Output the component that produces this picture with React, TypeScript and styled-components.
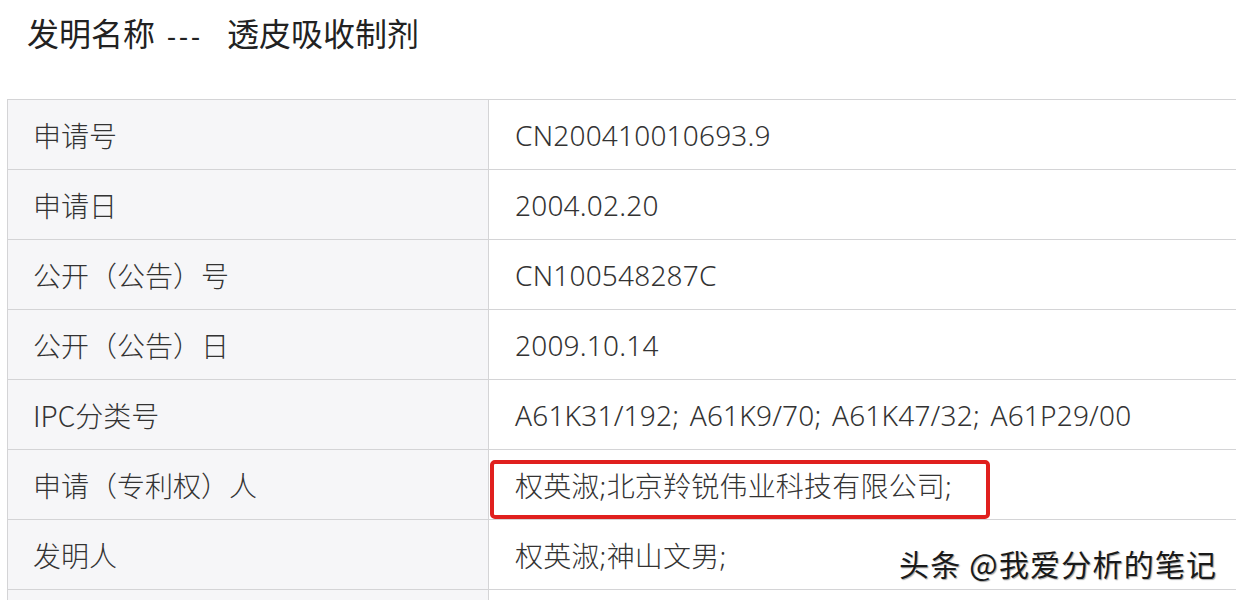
import React from 'react'
import styled, { createGlobalStyle } from 'styled-components'

const GlobalStyle = createGlobalStyle`
  html, body {
    margin: 0;
    padding: 0;
    background: #fff;
    overflow: hidden;
  }
  body {
    font-family: "Noto Sans", "Noto Sans CJK SC", sans-serif;
    color: #333;
  }
`

interface Row {
  label: string
  value: string
  marked?: boolean
}

const rows: Row[] = [
  { label: '申请号', value: 'CN200410010693.9' },
  { label: '申请日', value: '2004.02.20' },
  { label: '公开（公告）号', value: 'CN100548287C' },
  { label: '公开（公告）日', value: '2009.10.14' },
  { label: 'IPC分类号', value: 'A61K31/192; A61K9/70; A61K47/32; A61P29/00' },
  { label: '申请（专利权）人', value: '权英淑;北京羚锐伟业科技有限公司;', marked: true },
  { label: '发明人', value: '权英淑;神山文男;' },
  { label: '', value: '' },
]

export default function App() {
  return (
    <StyledPage>
      <GlobalStyle />
      <StyledTitle>
        发明名称<StyledDash>---</StyledDash>透皮吸收制剂
      </StyledTitle>
      <StyledTable>
        {rows.map((row, i) => (
          <React.Fragment key={i}>
            <StyledLabel>{row.label}</StyledLabel>
            <StyledValue>
              {row.value}
              {row.marked && <StyledMark />}
            </StyledValue>
          </React.Fragment>
        ))}
      </StyledTable>
      <StyledWatermark>头条 @我爱分析的笔记</StyledWatermark>
    </StyledPage>
  )
}

const StyledPage = styled.div`
  position: relative;
  width: 1236px;
  height: 600px;
  overflow: hidden;
`

const StyledTitle = styled.h1`
  margin: 0;
  padding: 12px 0 0 27px;
  height: 99px;
  font-size: 32px;
  line-height: 40px;
  font-weight: 400;
  color: #222;
  font-family: "Noto Sans CJK SC", "Noto Sans", sans-serif;
  box-sizing: border-box;
`

const StyledDash = styled.span`
  display: inline-block;
  margin: 0 24px 0 12px;
  letter-spacing: 3px;
  font-family: "Noto Sans", sans-serif;
  font-size: 28px;
`

const StyledTable = styled.div`
  display: grid;
  grid-template-columns: 481px 760px;
  grid-auto-rows: 70px;
  margin-left: 7px;
  border-top: 1px solid #d4d4d6;
  border-left: 1px solid #d4d4d6;
`

const StyledCell = styled.div`
  display: flex;
  align-items: center;
  box-sizing: border-box;
  border-right: 1px solid #d4d4d6;
  border-bottom: 1px solid #d4d4d6;
  font-size: 28px;
  font-weight: 300;
  color: #333;
  white-space: nowrap;
`

const StyledLabel = styled(StyledCell)`
  padding-left: 25px;
  background: #f6f6f8;
  font-family: "Noto Sans CJK SC", "Noto Sans", sans-serif;
`

const StyledValue = styled(StyledCell)`
  position: relative;
  padding-left: 26px;
  background: #fff;
  word-spacing: 3px;
  letter-spacing: 0.2px;
  font-family: "Noto Sans", "Noto Sans CJK SC", sans-serif;
`

const StyledMark = styled.span`
  position: absolute;
  left: 1px;
  top: 10px;
  width: 500px;
  height: 59px;
  box-sizing: border-box;
  border: 4px solid #e0201e;
  border-radius: 5px;
`

const StyledWatermark = styled.div`
  position: absolute;
  left: 899px;
  top: 543px;
  font-family: "Noto Sans CJK SC", sans-serif;
  font-size: 30px;
  line-height: 40px;
  letter-spacing: 1.2px;
  color: #1a1a1a;
  text-shadow: -1px -1px 0 #fff, 1px 1px 1px rgba(0, 0, 0, 0.35);
`
